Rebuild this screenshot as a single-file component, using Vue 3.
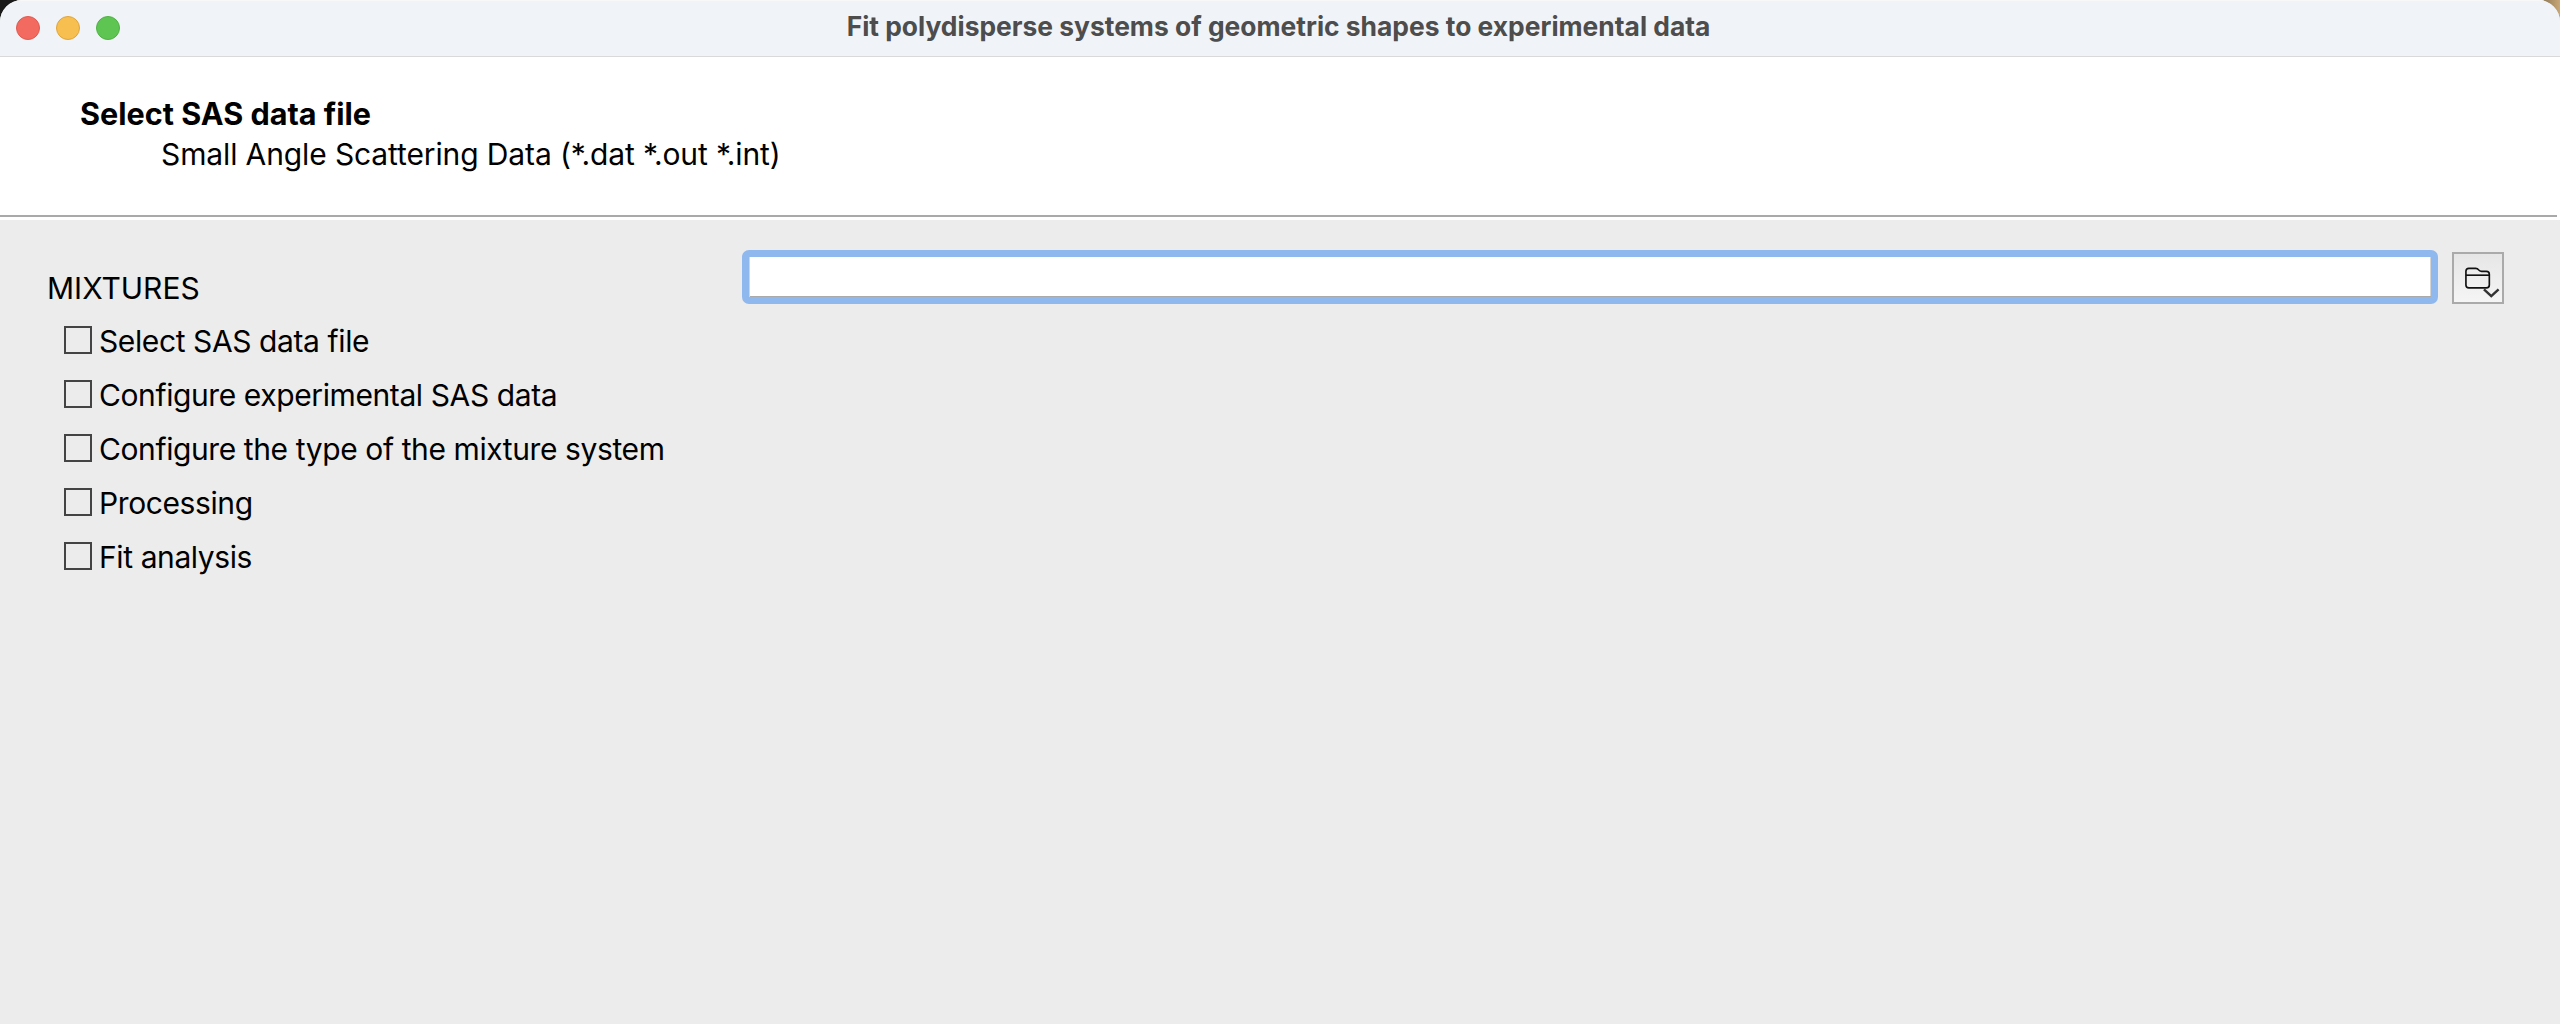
<script setup>
const steps = [
  'Select SAS data file',
  'Configure experimental SAS data',
  'Configure the type of the mixture system',
  'Processing',
  'Fit analysis',
]
</script>

<template>
  <div class="desktop">
    <div class="window">
      <header class="titlebar">
        <div class="lights">
          <span class="light red"></span>
          <span class="light yellow"></span>
          <span class="light green"></span>
        </div>
        <div class="title">Fit polydisperse systems of geometric shapes to experimental data</div>
      </header>
      <section class="banner">
        <div class="banner-title">Select SAS data file</div>
        <div class="banner-sub">Small Angle Scattering Data (*.dat *.out *.int)</div>
      </section>
      <div class="rule"><div class="rule-line"></div></div>
      <main class="body">
        <aside class="side">
          <div class="side-title">MIXTURES</div>
          <label v-for="s in steps" :key="s" class="step">
            <span class="box"></span>
            <span>{{ s }}</span>
          </label>
        </aside>
        <div class="picker">
          <div class="field"></div>
          <button class="browse" type="button" aria-label="Browse">
            <svg width="40" height="34" viewBox="0 0 40 34" fill="none">
              <path d="M3 8 V5 Q3 2 6 2 H13 Q15 2 16 3.500 Q17 5 19 5 H24 Q27 5 27 8 V19 Q27 22 24 22 H6 Q3 22 3 19 Z" stroke="#111" stroke-width="1.700" stroke-linejoin="round"/>
              <path d="M3 9 H27" stroke="#111" stroke-width="1.700"/>
              <path d="M21.500 23.500 L29 30.500 L36.500 23.500" stroke="#333" stroke-width="2.500"/>
            </svg>
          </button>
        </div>
      </main>
    </div>
  </div>
</template>

<style>
html, body { margin: 0; background: #1a1a1a; }
</style>

<style scoped>
.desktop {
  width: 2560px;
  height: 1024px;
  background: linear-gradient(90deg, #1a1a1a 0%, #1a1a1a 98%, #c9a877 100%);
  overflow: hidden;
  font-family: Inter, "Liberation Sans", sans-serif;
  color: #000;
}
.window {
  height: 1024px;
  border-radius: 22px 22px 0 0;
  overflow: hidden;
  background: #ececec;
  display: flex;
  flex-direction: column;
}
.titlebar {
  position: relative;
  height: 57px;
  box-sizing: border-box;
  padding: 0 3px 4px 0;
  flex: none;
  background: #f0f4f8;
  border-bottom: 1px solid #d9d9d9;
  box-shadow: inset 0 1px #f8f8f8;
  display: flex;
  align-items: center;
  justify-content: center;
}
.lights {
  position: absolute;
  left: 16px;
  top: 16px;
  display: flex;
  gap: 16px;
}
.light {
  width: 24px;
  height: 24px;
  box-sizing: border-box;
  border-radius: 50%;
  border: 1px solid;
}
.red { background: #f26a60; border-color: #df5a51; }
.yellow { background: #f6bf50; border-color: #dfa43c; }
.green { background: #5ec552; border-color: #50b045; }
.title {
  font-size: 26.400px;
  font-weight: 700;
  color: #4d4d4d;
  white-space: nowrap;
}
.banner {
  height: 158px;
  flex: none;
  box-sizing: border-box;
  background: #fff;
  padding: 37px 0 0 80px;
}
.banner-title {
  font-size: 30.600px;
  font-weight: 700;
  line-height: 40px;
}
.banner-sub {
  font-size: 30px;
  letter-spacing: -0.120px;
  line-height: 40px;
  padding-left: 81px;
}
.rule {
  height: 5px;
  flex: none;
  background: #fff;
}
.rule-line {
  height: 2px;
  margin-right: 3px;
  background: #a9a9a9;
}
.body {
  flex: 1;
  display: flex;
  padding: 30px 0 0 48px;
}
.side {
  width: 694px;
  flex: none;
  font-size: 30px;
  letter-spacing: -0.400px;
}
.side-title {
  height: 54px;
  line-height: 54px;
  margin: 10px 0 0 -1px;
  position: relative;
  top: 1px;
  letter-spacing: 0;
}
.step {
  display: flex;
  align-items: center;
  gap: 7px;
  height: 54px;
  padding-left: 16px;
  white-space: nowrap;
}
.box {
  width: 28px;
  height: 28px;
  box-sizing: border-box;
  border: 2px solid #444;
  margin-top: -2px;
}
.picker {
  flex: 1;
  display: flex;
  align-items: flex-end;
  align-self: flex-start;
  gap: 14px;
  padding-right: 56px;
}
.field {
  flex: 1;
  height: 54px;
  box-sizing: border-box;
  background: #fff;
  border: 7px solid #8fb8ef;
  border-radius: 7px;
  box-shadow: inset 1px 0 #d4d4d4, inset 0 -1px #aaa, inset -1px 0 #d4d4d4;
}
.browse {
  width: 52px;
  height: 52px;
  flex: none;
  padding: 12px 0 0 9px;
  box-sizing: border-box;
  border: 2px solid #aaa;
  background: linear-gradient(#e6e6e6, #f5f5f5);
  display: flex;
  align-items: flex-start;
  justify-content: flex-start;
}
</style>
